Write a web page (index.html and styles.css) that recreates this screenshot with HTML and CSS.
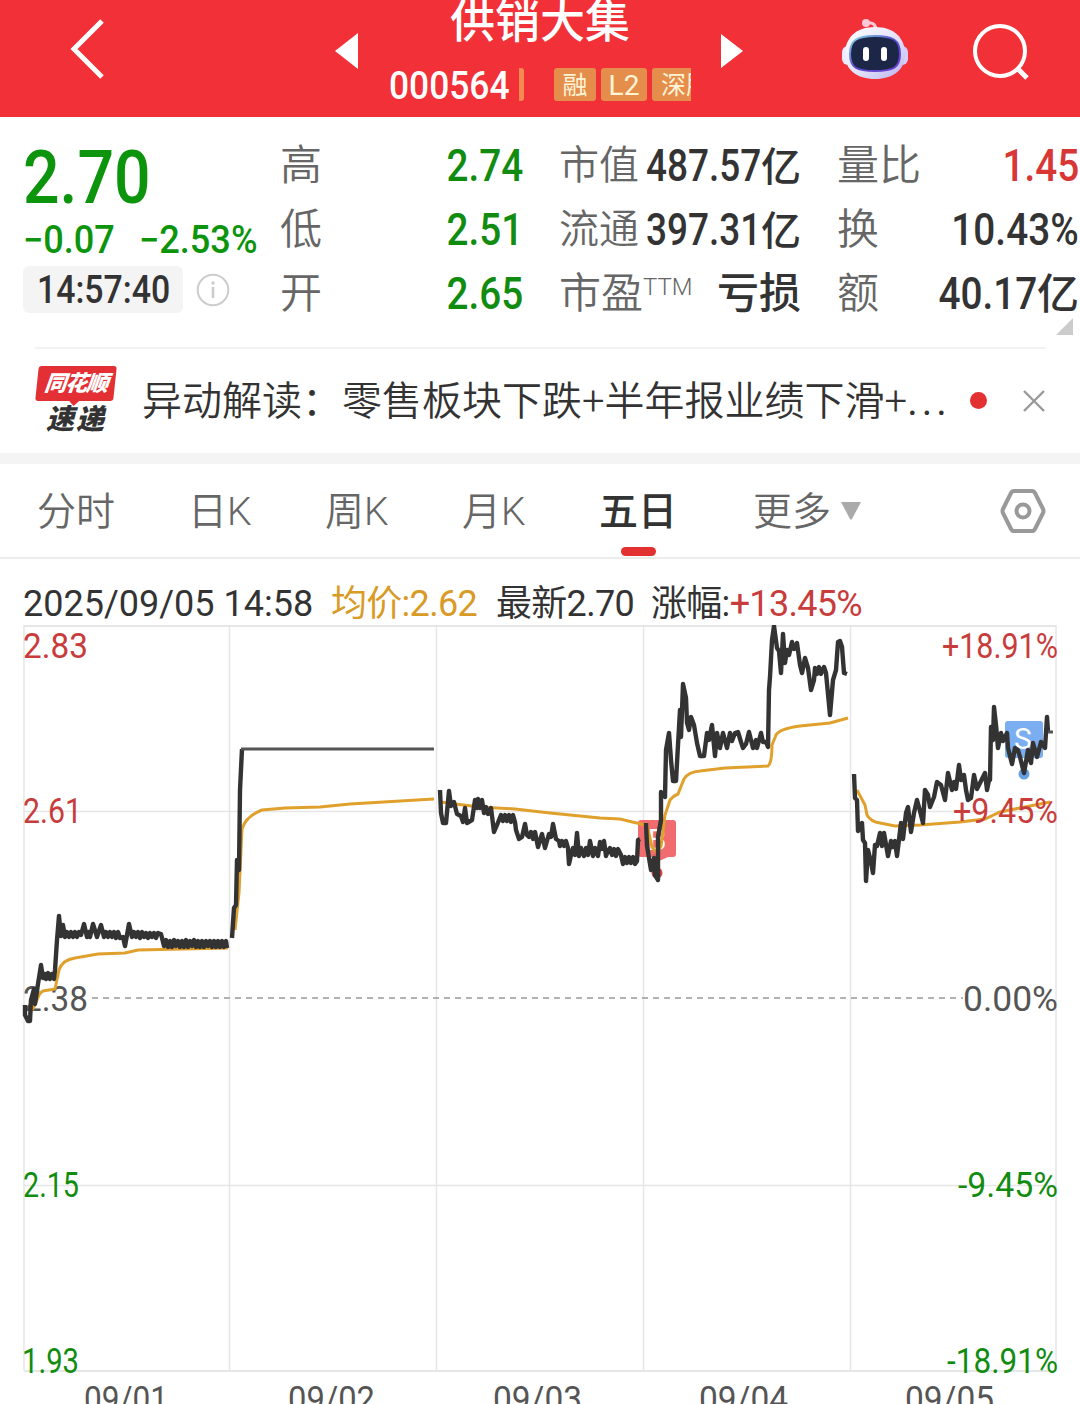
FILE: index.html
```
<!DOCTYPE html>
<html lang="zh-CN">
<head>
    <meta charset="UTF-8">
    <meta name="viewport" content="width=device-width, initial-scale=1.0">
    <title>供销大集 000564</title>
    <link rel="stylesheet" href="styles.css">
</head>
<body>
    <header class="header">
        <svg class="back" width="40" height="64" viewBox="0 0 40 64"><path d="M35 4 7 32 35 60" fill="none" stroke="#fff" stroke-width="5"/></svg>
        <svg class="prev" width="24" height="36" viewBox="0 0 24 36"><path d="M23 0V36L0 18Z" fill="#fff"/></svg>
        <div class="stock">
            <h1>供销大集</h1>
            <div class="stock-info">
                <span class="code"><span class="num">000564</span></span>
                <i class="tag-edge"></i>
                <span class="tag">融</span>
                <span class="tag tag-l2">L2</span>
                <span class="tag tag-cut">深股通</span>
            </div>
        </div>
        <svg class="next" width="22" height="34" viewBox="0 0 22 34"><path d="M0 0V34L22 17Z" fill="#fff"/></svg>
        <svg class="robot" width="68" height="64" viewBox="0 0 68 64">
            <defs>
                <linearGradient id="shell" x1="0" y1="0" x2="1" y2="1">
                    <stop offset="0" stop-color="#fff"/>
                    <stop offset=".55" stop-color="#e3e2fb"/>
                    <stop offset="1" stop-color="#b9b2ee"/>
                </linearGradient>
                <linearGradient id="rim" x1="0" y1="0" x2="1" y2="1">
                    <stop offset="0" stop-color="#86dce5"/>
                    <stop offset=".5" stop-color="#5848c8"/>
                    <stop offset="1" stop-color="#6d3fd2"/>
                </linearGradient>
            </defs>
            <path d="M25 5Q35 3 35 13" fill="none" stroke="#ffc9d7" stroke-width="3"/>
            <circle cx="25" cy="5" r="4" fill="#ffc9d7"/>
            <rect x="1" y="28" width="12" height="19" rx="6" fill="#eee9ff"/>
            <rect x="55" y="28" width="12" height="19" rx="6" fill="#d5cef8"/>
            <path d="M34 9C53 9 64 20 64 36C64 52 52 61 34 61S4 52 4 36C4 20 15 9 34 9Z" fill="url(#shell)"/>
            <path d="M34 18C52 18 59 22 59 36C59 50 52 53 34 53S9 50 9 36C9 22 16 18 34 18Z" fill="#1c2748" stroke="url(#rim)" stroke-width="2"/>
            <rect x="22" y="29" width="6" height="14" rx="3" fill="#fff"/>
            <rect x="40" y="29" width="6" height="14" rx="3" fill="#fff"/>
        </svg>
        <svg class="search" width="60" height="60" viewBox="0 0 60 60" fill="none" stroke="#fff" stroke-width="4"><circle cx="29" cy="29" r="25"/><path d="M46 46 56 56" stroke-width="5"/></svg>
    </header>

    <section class="quote">
        <div class="price">
            <div class="price-now"><span class="num">2.70</span></div>
            <div class="price-change">
                <span class="num">−0.07</span>
                <span class="num">−2.53%</span>
            </div>
            <div class="price-time">
                <div class="time"><span class="num">14:57:40</span></div>
                <svg width="34" height="34" viewBox="0 0 34 34"><circle cx="17" cy="17" r="15.3" fill="none" stroke="#ccc" stroke-width="2"/><path d="M17 14V25" stroke="#ccc" stroke-width="2.6"/><circle cx="17" cy="10" r="1.7" fill="#ccc"/></svg>
            </div>
        </div>
        <dl class="stats">
            <div class="stat"><dt>高</dt><dd class="green"><span class="num">2.74</span></dd></div>
            <div class="stat"><dt>低</dt><dd class="green"><span class="num">2.51</span></dd></div>
            <div class="stat"><dt>开</dt><dd class="green"><span class="num">2.65</span></dd></div>
        </dl>
        <dl class="stats stats-cap">
            <div class="stat"><dt>市值</dt><dd><span class="num">487.57</span>亿</dd></div>
            <div class="stat"><dt>流通</dt><dd><span class="num">397.31</span>亿</dd></div>
            <div class="stat stat-pe"><dt>市盈<sup>TTM</sup></dt><dd>亏损</dd></div>
        </dl>
        <dl class="stats">
            <div class="stat"><dt>量比</dt><dd class="red"><span class="num">1.45</span></dd></div>
            <div class="stat"><dt>换</dt><dd><span class="num">10.43%</span></dd></div>
            <div class="stat"><dt>额</dt><dd><span class="num">40.17</span>亿</dd></div>
        </dl>
        <i class="corner"></i>
    </section>

    <section class="news">
        <div class="news-logo">
            <div class="logo-top">同花顺</div>
            <div class="logo-bottom">速递</div>
        </div>
        <p class="news-title">异动解读：零售板块下跌+半年报业绩下滑+<span class="more">...</span></p>
        <i class="dot"></i>
        <svg class="close" width="24" height="24" viewBox="0 0 24 24"><path d="M2 2 22 22M22 2 2 22" stroke="#999" stroke-width="2.4"/></svg>
    </section>

    <nav class="tabs">
        <a>分时</a>
        <a>日K</a>
        <a>周K</a>
        <a>月K</a>
        <a class="active">五日</a>
        <a>更多<svg class="caret" width="22" height="20" viewBox="0 0 22 20"><path d="M1 1H21L12 18Q11 19 10 18Z" fill="#aaa"/></svg></a>
        <svg class="setting" width="46" height="46" viewBox="0 0 46 46" fill="none" stroke="#999" stroke-width="4"><path d="M14 3H32Q34 3 35 5L43 21Q44 23 43 25L35 41Q34 43 32 43H14Q12 43 11 41L3 25Q2 23 3 21L11 5Q12 3 14 3Z"/><circle cx="23" cy="23" r="6.5"/></svg>
    </nav>

    <div class="legend">
        <span class="legend-date">2025/09/05 14:58</span>
        <span class="legend-avg">均价:2.62</span>
        <span class="legend-last">最新2.70</span>
        <span class="legend-rise">涨幅:<b>+13.45%</b></span>
    </div>

    <svg class="chart" width="1080" height="779" viewBox="0 625 1080 779">
        <g class="grid">
            <path d="M24 626H1056M24 1371H1056" stroke-width="2"/>
            <path d="M24 811.5H1056M24 1185.5H1056"/>
            <path d="M24 625V1371M229.5 625V1371M436.5 625V1371M643.5 625V1371M850.5 625V1371M1056 625V1371"/>
        </g>
        <path class="base" d="M92 998H963"/>
        <text class="axis" x="23" y="1011" textLength="65" lengthAdjust="spacingAndGlyphs">2.38</text>

        <!-- buy / sell markers -->
        <g fill="#f16c6f">
            <rect x="638" y="820" width="38" height="37" rx="3"/>
            <path d="M653 857H668L657 862Z"/>
            <circle cx="657" cy="873" r="5.5" fill="#d94446"/>
            <text class="mark" x="657" y="850">B</text>
        </g>
        <g fill="#7aaef0">
            <rect x="1005" y="721" width="38" height="37" rx="3"/>
            <circle cx="1024" cy="774" r="5.5" fill="#669fe2"/>
            <text class="mark" x="1023" y="749">S</text>
        </g>

        <!-- average price -->
        <g class="avg">
            <path d="M31 1011C37 1006 37 993 43 991L55 989 59 970Q62 960 75 958L98 954 125 953 138 950 228 948"/>
            <path d="M235 930L239 893 242 829Q246 816 262 810L285 808 320 807 350 804 434 799"/>
            <path d="M441 802L455 804 480 807 515 809 550 813 570 815 600 818 620 819 645 825"/>
            <path d="M647 825L652 847 657 853 661 846 665 815 670 800Q673 796 678 794L684 779Q688 772 700 771L725 768 768 766Q772 763 772 745L776 735Q779 729 800 726L830 723 848 718"/>
            <path d="M857 790L865 805 867 815Q871 822 880 823L895 826 920 825 960 822 985 819 1000 812 1040 804 1050 802"/>
        </g>

        <!-- price -->
        <g class="line">
            <path d="M25 1005V1015L28 1021 30 1021 31 1000 34 989 35 1004 38 984 41 965 43 978 45 974 46 979 48 973 50 979 52 974 54 979 55 970 57 940 59 916 61 936 63 925 65 937 67 932 69 937 71 932 73 937 75 932 77 937 79 932 81 935 84 924 87 937 89 932 90 937 93 924 97 937 101 925 104 937 106 932 108 937 110 932 112 937 114 932 116 938 118 932 120 938 123 937 125 946 129 924 132 937 134 932 136 937 138 932 140 938 142 932 144 937 146 933 148 938 150 933 152 937 154 933 156 938 158 933 161 934 164 946 166 940 168 947 170 941 172 947 174 940 176 946 178 941 180 947 182 941 184 947 186 940 188 947 190 941 192 946 194 940 196 947 198 941 200 947 202 941 204 947 206 941 208 946 210 941 212 947 214 941 216 947 218 941 220 947 222 941 224 947 226 941 227 948"/>
            <path d="M232 938L234 908 236 905 237 860 239 870 240 790 242 749"/>
            <path d="M440 790L441 813 443 823 446 823 449 791 451 806 454 802 457 814 461 816 463 822 465 808 467 823 472 820 475 800 477 808 478 799 480 808 482 800 484 813 486 807 488 814 491 808 494 832 497 825 501 815 503 821 505 815 507 821 509 815 511 822 513 815 515 822 516 830 519 839 522 837 525 824 527 835 529 837 531 832 533 839 535 832 538 847 542 834 545 848 549 834 551 837 553 824 556 839 559 841 560 846 562 841 564 846 566 841 568 848 569 864 571 855 573 848 575 855 577 833 579 856 581 848 584 856 586 848 588 855 590 841 593 856 595 848 598 856 600 842 602 849 604 841 606 856 608 851 610 848 612 855 614 849 616 856 618 849 621 855 623 864 625 857 627 863 629 857 631 863 633 857 635 864 637 861 638 840 640 839"/>
            <path d="M646 823L647 846 649 858 651 870 654 858 655 875 658 880 658 837 661 820 661 792 665 797 666 750 669 733 671 760 673 781 676 781 678 745 680 710 681 737 683 684 686 698 687 723 689 730 691 717 694 725 697 743 700 756 704 756 707 733 709 740 712 725 715 756 717 733 720 748 723 733 727 748 730 733 732 741 735 733 738 732 741 742 743 748 746 744 749 732 753 748 756 740 757 748 761 733 763 742 766 742 768 747 769 690 770 677 772 640 774 626 777 648 779 651 781 673 783 634 785 663 787 650 789 655 792 642 794 649 797 643 800 665 802 673 805 658 808 668 811 690 814 680 815 668 817 674 819 667 821 674 824 667 826 673 830 715 833 680 836 670 838 642 840 641 842 647 844 673 847 674"/>
            <path d="M854 774L855 798 857 800 858 831 862 823 863 840 865 843 866 881 868 850 871 862 873 873 875 845 877 846 880 833 882 846 884 833 888 856 891 841 893 847 895 841 897 856 901 823 903 839 906 813 908 807 911 832 914 813 917 800 920 811 923 823 925 790 928 795 930 807 934 797 937 782 941 785 945 800 948 773 952 790 954 782 956 789 959 765 961 780 964 775 966 790 968 800 971 798 974 775 977 789 981 781 985 773 987 790 989 780 990 780 991 727 993 740 994 707 996 725 998 748 1001 733 1003 741 1007 733 1008 748 1012 764 1015 748 1018 750 1020 757 1024 773 1028 750 1031 763 1033 743 1037 757 1041 742 1045 748 1047 717 1048 732"/>
            <path class="flat" d="M241 749H434M1048 732H1053"/>
        </g>

        <g class="axis">
            <text class="up" x="23" y="658" textLength="65" lengthAdjust="spacingAndGlyphs">2.83</text>
            <text class="up" x="23" y="823" textLength="59" lengthAdjust="spacingAndGlyphs">2.61</text>
            <text class="down" x="23" y="1197" textLength="56" lengthAdjust="spacingAndGlyphs">2.15</text>
            <text class="down" x="22" y="1373" textLength="57" lengthAdjust="spacingAndGlyphs">1.93</text>
        </g>
        <g class="axis">
            <text class="up" x="942" y="658" textLength="116" lengthAdjust="spacingAndGlyphs">+18.91%</text>
            <text class="up" x="953" y="823" textLength="105" lengthAdjust="spacingAndGlyphs">+9.45%</text>
            <text x="963" y="1011" textLength="95" lengthAdjust="spacingAndGlyphs">0.00%</text>
            <text class="down" x="958" y="1197" textLength="100" lengthAdjust="spacingAndGlyphs">-9.45%</text>
            <text class="down" x="947" y="1373" textLength="111" lengthAdjust="spacingAndGlyphs">-18.91%</text>
        </g>
        <g class="axis">
            <text x="84" y="1411" textLength="84" lengthAdjust="spacingAndGlyphs">09/01</text>
            <text x="288" y="1411" textLength="87" lengthAdjust="spacingAndGlyphs">09/02</text>
            <text x="493" y="1411" textLength="89" lengthAdjust="spacingAndGlyphs">09/03</text>
            <text x="699" y="1411" textLength="89" lengthAdjust="spacingAndGlyphs">09/04</text>
            <text x="905" y="1411" textLength="89" lengthAdjust="spacingAndGlyphs">09/05</text>
        </g>
    </svg>
</body>
</html>
```
FILE: styles.css
```
* {
    box-sizing: border-box;
}

body {
    margin: 0;
    width: 1080px;
    height: 1404px;
    overflow: hidden;
    background-color: #fff;
    color: #333;
    font-family: Roboto, "Noto Sans CJK SC", sans-serif;
}

h1, p, dl, dd {
    margin: 0;
}

/* narrow figures */
.num {
    display: inline-block;
    font-family: Roboto, sans-serif;
    font-weight: 500;
    transform: scaleX(0.88);
    transform-origin: right;
    white-space: nowrap;
}

.green {
    color: #118c11;
}

.red {
    color: #d93636;
}

/* header */
.header {
    display: flex;
    align-items: flex-start;
    height: 117px;
    background-color: #f13038;
    color: #fff;
}

.back {
    margin: 17px 0 0 67px;
}

.prev {
    margin: 33px 0 0 228px;
}

.stock {
    width: 332px;
    margin-left: 30px;
}

.stock h1 {
    width: 302px;
    height: 44px;
    line-height: 46px;
    font-size: 45px;
    font-weight: 500;
    text-align: center;
}

.stock-info {
    display: flex;
    width: 302px;
    height: 33px;
    margin-top: 24px;
    overflow: hidden;
    line-height: 35px;
}

.code {
    flex: none;
    width: 130px;
    font-size: 38px;
    line-height: 36px;
}

.code .num {
    transform: scaleX(0.93);
    transform-origin: left;
}

.tag-edge {
    flex: none;
    width: 5px;
    height: 33px;
    margin-right: 30px;
    border-radius: 0 3px 3px 0;
    background-color: #f58a50;
}

.tag {
    flex: none;
    width: 42px;
    height: 33px;
    margin-right: 5px;
    border-radius: 3px;
    background-color: #e58e4c;
    color: #fff5d6;
    font-size: 25px;
    text-align: center;
}

.tag-l2 {
    width: 46px;
    font-size: 28px;
}

.tag-cut {
    width: 90px;
    margin: 0;
    padding-left: 9px;
    text-align: left;
}

.next {
    margin: 34px 0 0;
}

.robot {
    margin: 18px 0 0 98px;
}

.search {
    margin: 22px 0 0 62px;
}

/* quote */
.quote {
    display: grid;
    grid-template-columns: 257px 243px 314px 1fr;
    position: relative;
    height: 230px;
    padding: 17px 1px 0 23px;
}

.price {
    color: #0c940c;
}

.price .num {
    transform-origin: left;
}

.price-now {
    height: 83px;
    line-height: 88px;
    font-size: 74px;
}

.price-now .num {
    transform: scaleX(0.87);
}

.price-change {
    display: flex;
    height: 46px;
    line-height: 46px;
    font-size: 38px;
}

.price-change .num {
    transform: scaleX(0.95);
}

.price-change .num:first-child {
    width: 116px;
}

.price-time {
    display: flex;
    align-items: center;
    gap: 13px;
    margin-top: 3px;
}

.time {
    width: 160px;
    height: 47px;
    padding-left: 14px;
    border-radius: 6px;
    background-color: #f4f4f4;
    color: #333;
    font-size: 38px;
    line-height: 49px;
}

.time .num {
    transform: scaleX(0.89);
}

.stat {
    display: flex;
    justify-content: space-between;
    height: 64px;
    line-height: 64px;
    font-size: 42px;
    white-space: nowrap;
}

.stat dt {
    color: #666;
    font-weight: 350;
}

.stat dd {
    font-weight: 500;
}

.stats .num {
    font-size: 44px;
}

.stats-cap {
    padding: 0 36px 0 36px;
}

.stats-cap .stat {
    font-size: 40px;
}

.stats-cap .num {
    margin-left: -20px;
    transform: scaleX(0.84);
}

.stats-cap .stat-pe {
    font-size: 42px;
}

.stat sup {
    display: inline-block;
    font-size: 24px;
    line-height: 1;
    vertical-align: 13px;
}

.corner {
    position: absolute;
    right: 7px;
    bottom: 12px;
    border-left: 17px solid transparent;
    border-bottom: 17px solid #ccc;
}

/* news */
.news {
    display: flex;
    align-items: center;
    height: 106px;
    margin: 0 34px 0 35px;
    border-top: 2px solid #f2f2f2;
}

.news-logo {
    width: 82px;
    height: 70px;
    margin-right: 25px;
    font-weight: 900;
    font-style: italic;
    text-align: center;
}

.logo-top {
    position: relative;
    width: 78px;
    height: 35px;
    margin-left: 2px;
    border-radius: 3px;
    background-color: #e33035;
    color: #fff;
    font-size: 22px;
    line-height: 35px;
    letter-spacing: -1px;
    transform: skewX(-6deg);
}

.logo-top::after {
    content: "";
    position: absolute;
    left: 34px;
    bottom: -5px;
    border: 5px solid transparent;
    border-top-color: #e33035;
    border-bottom: 0;
}

.logo-bottom {
    height: 34px;
    font-size: 28px;
    line-height: 38px;
    letter-spacing: 2px;
}

.news-title {
    flex: none;
    width: 811px;
    margin-top: -6px;
    font-size: 40px;
    font-weight: 350;
    white-space: nowrap;
}

.more {
    font-weight: 400;
    letter-spacing: 4px;
}

.dot {
    flex: none;
    width: 17px;
    height: 17px;
    margin: -2px 0 0 17px;
    border-radius: 50%;
    background-color: #e33030;
}

.close {
    flex: none;
    margin: -1px 0 0 35px;
}

/* tabs */
.tabs {
    display: grid;
    grid-template-columns: 151px 137px 137px 137px 154px 247px 46px;
    align-items: center;
    height: 106px;
    padding: 0 0 5px 37px;
    border-top: 11px solid #f4f4f4;
    border-bottom: 2px solid #ececec;
    color: #666;
    font-size: 39px;
    font-weight: 350;
}

.tabs .active {
    position: relative;
    color: #333;
    font-weight: 500;
}

.tabs .active::after {
    content: "";
    position: absolute;
    left: 22px;
    bottom: -20px;
    width: 35px;
    height: 9px;
    border-radius: 5px;
    background-color: #e33030;
}

.caret {
    margin-left: 9px;
    vertical-align: 4px;
}

.setting {
    margin-top: 5px;
}

/* chart */
.legend {
    display: flex;
    height: 66px;
    padding-left: 23px;
    font-size: 36px;
    letter-spacing: -0.7px;
    line-height: 90px;
    white-space: nowrap;
}

.legend-date {
    width: 308px;
    letter-spacing: 0;
}

.legend-avg {
    width: 165px;
    color: #d99a26;
}

.legend-last {
    width: 155px;
}

.legend-rise b {
    color: #c83c3c;
    font-weight: 400;
}

.chart {
    display: block;
}

.grid {
    fill: none;
    stroke: #e6e6e6;
    stroke-width: 1.5;
}

.base {
    stroke: #999;
    stroke-width: 1.5;
    stroke-dasharray: 6 5;
}

.avg {
    fill: none;
    stroke: #e0a02c;
    stroke-width: 3;
}

.line {
    fill: none;
    stroke: #333;
    stroke-width: 4.4;
    stroke-linejoin: round;
}

.flat {
    stroke: #555;
    stroke-width: 3;
}

.axis {
    fill: #555;
    font-size: 35px;
}

.up {
    fill: #c83c3c;
}

.down {
    fill: #118c11;
}

.mark {
    fill: #fff;
    font-size: 30px;
    text-anchor: middle;
}
```
